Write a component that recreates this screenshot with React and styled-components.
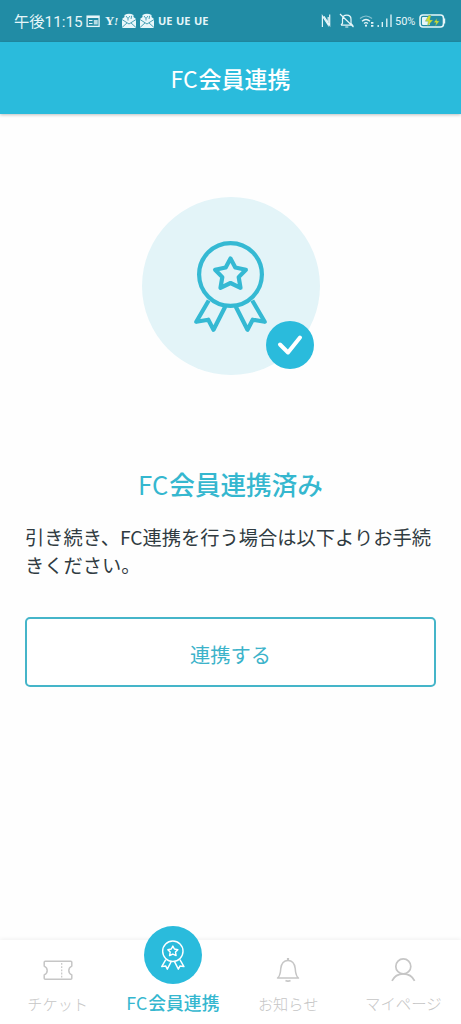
import styled, { createGlobalStyle } from "styled-components";

const GlobalStyle = createGlobalStyle`
  * {
    box-sizing: border-box;
  }

  body {
    margin: 0;
    background: #fefefe;
    font-family: "Noto Sans CJK JP", sans-serif;
  }
`;

const Screen = styled.div`
  display: flex;
  flex-direction: column;
  height: 1024px;
  overflow: hidden;
`;

const StatusBar = styled.div`
  display: flex;
  align-items: center;
  justify-content: space-between;
  flex: none;
  height: 42px;
  padding: 0 15px 0 14px;
  background: #218ca5;
  color: #e6f6f9;
`;

const StatusGroup = styled.div`
  display: flex;
  align-items: center;

  & > svg {
    display: block;
    flex: none;
  }
`;

const Clock = styled.span`
  width: 72px;
  padding-top: 1px;
  font-family: Roboto, "Noto Sans CJK JP", sans-serif;
  font-size: 15.3px;
  line-height: 20px;
  white-space: nowrap;
`;

const Carrier = styled.span`
  width: 18px;
  font-family: "Open Sans", sans-serif;
  font-size: 11px;
  font-weight: 700;
  line-height: 14px;
`;

const Yahoo = styled.span`
  width: 17px;
  font-family: "Liberation Serif", serif;
  font-size: 13px;
  font-weight: 700;
  line-height: 14px;
  letter-spacing: -0.5px;

  & > i {
    font-size: 11px;
  }
`;

const Percent = styled.span`
  width: 24px;
  padding-top: 1px;
  font-family: Roboto, sans-serif;
  font-size: 11px;
  line-height: 14px;
`;

const Header = styled.header`
  display: flex;
  align-items: center;
  justify-content: center;
  flex: none;
  height: 72px;
  background: #2abbdc;
  box-shadow: 0 1px 3px rgba(0, 0, 0, 0.25);
  color: #fff;
  font-size: 23px;
  font-weight: 500;
  line-height: 32px;
`;

const Latin = styled.span`
  margin-right: 1px;
  font-weight: 400;
`;

const Main = styled.main`
  display: flex;
  flex-direction: column;
  align-items: center;
  flex: 1;
  padding: 83px 25px 0;
`;

const Emblem = styled.div`
  position: relative;
  display: flex;
  justify-content: center;
  width: 178px;
  height: 178px;
  padding-top: 43px;
  border-radius: 50%;
  background: #e3f4f8;
`;

const CheckBadge = styled.div`
  position: absolute;
  right: 6px;
  bottom: 6px;
  display: flex;
  align-items: center;
  justify-content: center;
  width: 48px;
  height: 48px;
  border-radius: 50%;
  background: #2abbdc;
`;

const Title = styled.h1`
  margin: 91px 0 0;
  color: #35b7cf;
  font-size: 25.6px;
  font-weight: 500;
  line-height: 36px;
`;

const Text = styled.p`
  width: 100%;
  margin: 21px 0 0;
  color: #303b41;
  font-size: 19.25px;
  line-height: 28px;
  white-space: nowrap;
`;

const Button = styled.button`
  width: 411px;
  height: 70px;
  margin-top: 38px;
  padding: 3px 0 0;
  border: 2px solid #45b5c9;
  border-radius: 5px;
  background: #fff;
  color: #3cb3ca;
  font-family: inherit;
  font-size: 20.3px;
  line-height: 28px;
`;

const TabBar = styled.nav`
  display: grid;
  grid-template-columns: repeat(4, 1fr);
  flex: none;
  height: 84px;
  background: #fff;
  box-shadow: 0 -1px 4px rgba(0, 0, 0, 0.06);
`;

const Tab = styled.div`
  display: flex;
  flex-direction: column;
  align-items: center;
  color: ${({ $active }) => ($active ? "#35b7cf" : "#c6c6c6")};
  font-size: ${({ $size }) => $size}px;
  font-weight: ${({ $active }) => ($active ? 500 : 300)};
  line-height: 22px;
  white-space: nowrap;
`;

const TabIcon = styled.div`
  display: flex;
  align-items: center;
  justify-content: center;
  height: ${({ $active }) => ($active ? 58 : 32)}px;
  width: ${({ $active }) => ($active ? 58 : 32)}px;
  margin-top: ${({ $active }) => ($active ? -14 : 14)}px;
  margin-bottom: ${({ $active }) => ($active ? 7 : 6)}px;
  border-radius: 50%;
  background: ${({ $active }) => ($active ? "#2abbdc" : "transparent")};
`;

const Medal = ({ width, height, color, stroke }) => (
  <svg
    width={width}
    height={height}
    viewBox="0 0 74 92"
    fill="none"
    stroke={color}
    strokeWidth={stroke}
    strokeLinejoin="round"
  >
    <circle cx="36.5" cy="34.5" r="31.4" />
    <path d="M36.5 18.5l4.8 9 10.6 2.2-7.2 7.4 1.8 10.7-10-4.8-10 4.8 1.8-10.7-7.2-7.4 10.6-2.2z" />
    <path d="M14.7 60.5L2.3 81.8l12-2.1 5.2 10L31.3 66.5" />
    <path d="M58.3 60.5l12.4 21.3-12-2.1-5.2 10-11.8-23.2" />
  </svg>
);

const NewsIcon = () => (
  <svg width="19" height="14" viewBox="0 0 19 14" fill="none" stroke="#e6f6f9">
    <rect x="1.1" y="2.1" width="12" height="10.3" strokeWidth="1.3" />
    <path d="M1 3h12" strokeWidth="2" />
    <path d="M3 6.5h3.5M3 9.5h3.5" />
    <path d="M7.8 6h3.9v4.5H7.8z" fill="#e6f6f9" stroke="none" opacity="0.75" />
  </svg>
);

const MailIcon = () => (
  <svg width="18" height="16" viewBox="0 0 18 16">
    <path d="M0 6l2.5-2V2Q7-.6 11.5 2v2L14 6v9H0z" fill="#e9f7fa" />
    <path
      d="M0 6.5l7 4.5 7-4.5M0 14.5l5-4.6M14 14.5L9 9.9M4 3l2 2.5L8 3M6 5.5v2M9.7 2.8L9 6"
      fill="none"
      stroke="#218ca5"
      strokeWidth="0.8"
    />
  </svg>
);

const NfcIcon = () => (
  <svg width="18" height="16" viewBox="0 0 18 16" fill="none" stroke="#e6f6f9">
    <path d="M1.4 14V3l5.8 9V4M3 3.2l5.7 9V1.5" strokeWidth="1.2" />
  </svg>
);

const MutedIcon = () => (
  <svg width="20" height="16" viewBox="0 0 20 16" fill="none" stroke="#e6f6f9">
    <path
      d="M2 12.2h11.5L12 10.3V6.2c0-2.4-1.7-4-4.2-4S3.5 3.8 3.5 6.2v4L2 12.2M6.3 14h3M1 1l13.5 13"
      strokeWidth="1.2"
    />
  </svg>
);

const WifiIcon = () => (
  <svg width="18" height="16" viewBox="0 0 18 16" fill="none" stroke="#e6f6f9">
    <path d="M1 5.5c3.6-3.3 8.4-3.3 12 0" strokeWidth="1.2" opacity="0.5" />
    <path d="M3 8.2c2.4-2.1 5.6-2.1 8 0M5 10.5c1.2-1 2.8-1 4 0" strokeWidth="1.3" />
    <circle cx="7" cy="12.7" r="1.1" fill="#e6f6f9" stroke="none" />
    <path d="M12 9h2.4v1.7H12zM12 12h2.4v1.7H12z" fill="#e6f6f9" stroke="none" />
  </svg>
);

const SignalIcon = () => (
  <svg width="18" height="16" viewBox="0 0 18 16" stroke="#e6f6f9" strokeWidth="1.3">
    <path d="M1.2 12v2M5.3 9v5M9.8 5.5V14M14 1.5V14" />
  </svg>
);

const BatteryIcon = () => (
  <svg width="27" height="16" viewBox="0 0 27 16">
    <rect x="1" y="2" width="23.5" height="12" rx="3" fill="none" stroke="#e6f6f9" strokeWidth="1.6" />
    <path d="M24.7 5.5h1.5v5h-1.5z" fill="#e6f6f9" />
    <rect x="3" y="4" width="8" height="8" rx="1" fill="#e6f6f9" />
    <path
      d="M9.7 2.5L6.3 8.2h3L8.5 13l5.5-6h-3.3l1.3-4.5zM18 5.5l-3.2 4h2.3l-.6 3.5 3.8-5h-2.5z"
      fill="#d3dd30"
      stroke="#4b9984"
      strokeWidth="0.4"
    />
  </svg>
);

const TicketIcon = () => (
  <svg width="30" height="21" viewBox="0 0 30 21" fill="none" stroke="currentColor" strokeWidth="1.5">
    <path
      d="M2.2 1.2h25.6q1 0 1 1v3.9c-2 .9-3 2.4-3 4.4s1 3.5 3 4.4v3.4q0 1-1 1H2.2q-1 0-1-1v-3.4c2-.9 3-2.4 3-4.4s-1-3.5-3-4.4V2.2q0-1 1-1z"
      strokeLinejoin="round"
    />
    <path d="M18.7 3v15" strokeDasharray="1.8 1.4" strokeWidth="1.2" />
  </svg>
);

const BellIcon = () => (
  <svg width="24" height="26" viewBox="0 0 24 26" fill="none" stroke="currentColor" strokeWidth="1.5">
    <path d="M1.5 21c1.8-1.2 2.4-3 2.9-6l.4-3.7c.6-4.8 3-7.9 7.2-7.9s6.6 3.1 7.2 7.9l.4 3.7c.5 3 1.1 4.8 2.9 6z" strokeLinejoin="round" />
    <path d="M12 1v2.4" strokeWidth="2.2" />
    <path d="M9.5 23.5q2.5 1.4 5 0" strokeWidth="1.7" />
  </svg>
);

const PersonIcon = () => (
  <svg width="26" height="26" viewBox="0 0 26 26" fill="none" stroke="currentColor" strokeWidth="1.7">
    <circle cx="13.3" cy="9.4" r="7.5" />
    <path d="M2 23.8c2.3-4.8 6.3-7 11.3-7s9 2.2 11.3 7" />
  </svg>
);

const tabs = [
  { label: "チケット", size: 15.2, icon: <TicketIcon /> },
  {
    label: (
      <>
        <Latin>FC</Latin>会員連携
      </>
    ),
    size: 17.8,
    active: true,
    icon: <Medal width={24} height={30} color="#fff" stroke={4.4} />,
  },
  { label: "お知らせ", size: 15.2, icon: <BellIcon /> },
  { label: "マイページ", size: 15.4, icon: <PersonIcon /> },
];

const App = () => (
  <>
    <GlobalStyle />
    <Screen>
      <StatusBar>
        <StatusGroup>
          <Clock>午後11:15</Clock>
          <NewsIcon />
          <Yahoo>
            Y<i>!</i>
          </Yahoo>
          <MailIcon />
          <MailIcon />
          <Carrier>UE</Carrier>
          <Carrier>UE</Carrier>
          <Carrier>UE</Carrier>
        </StatusGroup>
        <StatusGroup>
          <NfcIcon />
          <MutedIcon />
          <WifiIcon />
          <SignalIcon />
          <Percent>50%</Percent>
          <BatteryIcon />
        </StatusGroup>
      </StatusBar>
      <Header>
        <Latin>FC</Latin>会員連携
      </Header>
      <Main>
        <Emblem>
          <Medal width={74} height={92} color="#35b9d3" stroke={4.2} />
          <CheckBadge>
            <svg width="26" height="22" viewBox="0 0 26 22" fill="none" stroke="#fff" strokeWidth="4">
              <path d="M3 10.5l8 8L23 3.5" strokeLinecap="round" strokeLinejoin="round" />
            </svg>
          </CheckBadge>
        </Emblem>
        <Title>
          <Latin>FC</Latin>会員連携済み
        </Title>
        <Text>
          引き続き、FC連携を行う場合は以下よりお手続
          <br />
          きください。
        </Text>
        <Button>連携する</Button>
      </Main>
      <TabBar>
        {tabs.map(({ label, size, active, icon }, index) => (
          <Tab key={index} $active={active} $size={size}>
            <TabIcon $active={active}>{icon}</TabIcon>
            <span>{label}</span>
          </Tab>
        ))}
      </TabBar>
    </Screen>
  </>
);

export default App;
